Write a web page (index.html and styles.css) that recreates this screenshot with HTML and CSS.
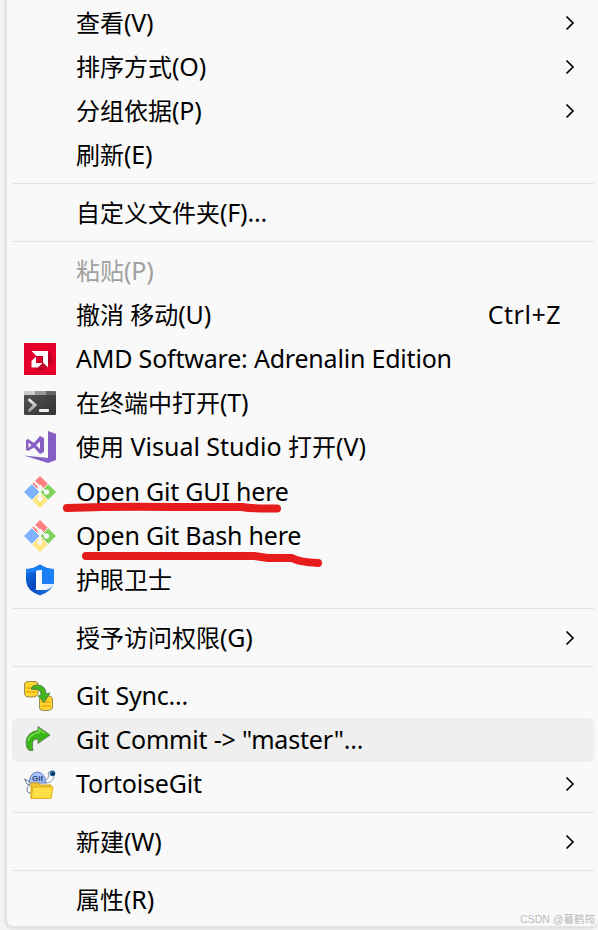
FILE: index.html
```html
<!DOCTYPE html>
<html lang="zh-CN">
<head>
  <meta charset="UTF-8" />
  <meta name="viewport" content="width=device-width, initial-scale=1.0"/>
  <title>Context Menu</title>
  <link rel="stylesheet" href="styles.css">
</head>
<body>

  <!-- Shared shapes -->
  <svg class="defs">
    <symbol id="arrow" viewBox="0 0 10 16">
      <path d="M1.5 1.5 L8 8 L1.5 14.5" fill="none" stroke="#000" stroke-width="1.7"/>
    </symbol>
    <symbol id="git" viewBox="0 0 32 32">
      <path d="M16 0 L24 8 L16 16 L8 8Z" fill="#ff8080"/>
      <path d="M24 8 L32 16 L24 24 L16 16Z" fill="#80d25b"/>
      <path d="M8 8 L16 16 L8 24 L0 16Z" fill="#80b3ff"/>
      <path d="M16 16 L24 24 L16 32 L8 24Z" fill="#ffe680"/>
      <path d="M8 8 L24 24 M24 8 L8 24" fill="none" stroke="#f9f9f9" stroke-width="1"/>
      <path d="M9 4.500 L16 11 V23 M16 11 L22.500 16" fill="none" stroke="#f9f9f9" stroke-width="2.2"/>
      <circle cx="16" cy="11.500" r="2.600" fill="#f9f9f9"/>
      <circle cx="22.500" cy="16" r="2.600" fill="#f9f9f9"/>
      <circle cx="16" cy="22.500" r="2.600" fill="#f9f9f9"/>
    </symbol>
  </svg>

  <div class="menu">
    <div class="item"><span class="label">查看<span class="en">(V)</span></span><svg class="arrow"><use href="#arrow"/></svg></div>
    <div class="item"><span class="label">排序方式<span class="en">(O)</span></span><svg class="arrow"><use href="#arrow"/></svg></div>
    <div class="item"><span class="label">分组依据<span class="en">(P)</span></span><svg class="arrow"><use href="#arrow"/></svg></div>
    <div class="item"><span class="label">刷新<span class="en">(E)</span></span></div>
    <div class="line"></div>
    <div class="item"><span class="label">自定义文件夹<span class="en">(F)...</span></span></div>
    <div class="line"></div>
    <div class="item disabled"><span class="label">粘贴<span class="en">(P)</span></span></div>
    <div class="item"><span class="label">撤消 移动<span class="en">(U)</span></span><span class="key">Ctrl+Z</span></div>
    <div class="item">
      <svg class="icon" viewBox="0 0 32 32">
        <rect width="32" height="32" fill="#e4002b"/>
        <path d="M24 8 L28 12 V20 L17 28 L8 24Z" fill="#b90024"/>
        <path d="M7.500 8 H24 V24.500 L19 19.500 V13 H12.500Z" fill="#fff"/>
        <path d="M12 13.500 V20 H18.500 L14 24.500 H7.500 V18Z" fill="#fff"/>
        <rect x="13" y="13" width="6" height="6.500" fill="#d20029"/>
      </svg>
      <span class="label en">AMD Software: Adrenalin Edition</span>
    </div>
    <div class="item">
      <svg class="icon" viewBox="0 0 32 32">
        <defs>
          <linearGradient id="term" x2="1" y2="1"><stop stop-color="#555"/><stop offset="1" stop-color="#333"/></linearGradient>
          <linearGradient id="prompt" x2="0" y2="1"><stop stop-color="#eee"/><stop offset="1" stop-color="#999"/></linearGradient>
        </defs>
        <rect y="4" width="32" height="24" rx="1.5" fill="url(#term)"/>
        <path d="M0 8 V5.500 Q0 4 1.500 4 H11 V8Z" fill="#ccc"/>
        <path d="M11 4 H22 V8 H11Z" fill="#999"/>
        <path d="M22 4 H30.500 Q32 4 32 5.500 V8 H22Z" fill="#666"/>
        <path d="M5.500 13 L11 18 L5.500 23.500" fill="none" stroke="url(#prompt)" stroke-width="3" stroke-linecap="round"/>
        <rect x="15" y="22" width="10" height="3" rx="1" fill="#eee"/>
      </svg>
      <span class="label">在终端中打开<span class="en">(T)</span></span>
    </div>
    <div class="item">
      <svg class="icon" viewBox="0 0 32 32">
        <path d="M24 0 L32 3 V29 L24 32 L0 24.500 L24 27Z" fill="#865fc5"/>
        <path d="M2 9 L4 8 L10 12 L16 5 L20 7 V21 L16 23 L10 16.500 L4 20 L2 19Z M4.500 11.500 V17 L7.500 14.300Z M16 10.500 L12 14.300 L16 18Z" fill="#865fc5" fill-rule="evenodd"/>
      </svg>
      <span class="label">使用<span class="en wide"> Visual Studio </span>打开<span class="en wide">(V)</span></span>
    </div>
    <div class="item marked first">
      <svg class="icon"><use href="#git"/></svg>
      <span class="label en">Open Git GUI here</span>
      <svg class="mark gui" viewBox="0 0 224 16"><path d="M6 8 Q60 6 112 7 H181 Q192 9 216 8.500"/></svg>
    </div>
    <div class="item marked">
      <svg class="icon"><use href="#git"/></svg>
      <span class="label en">Open Git Bash here</span>
      <svg class="mark bash" viewBox="0 0 244 18"><path d="M6 6 H174 L188 8 H212 Q218 12 238 13"/></svg>
    </div>
    <div class="item">
      <svg class="icon" viewBox="0 0 32 32">
        <defs>
          <linearGradient id="shield" x2="1" y2="1"><stop stop-color="#1479ed"/><stop offset=".5" stop-color="#0847bd"/><stop offset="1" stop-color="#1f86f5"/></linearGradient>
          <linearGradient id="ell" x2="1" y2="0"><stop stop-color="#fff"/><stop offset="1" stop-color="#dcecff"/></linearGradient>
        </defs>
        <path d="M16 .5 Q23 5 30 5 V17 Q29 27 16 31.500 Q3 27 2 17 V5 Q9 5 16 .5Z" fill="url(#shield)"/>
        <path d="M16 .5 Q23 5 30 5 V17 L29.500 20 H18 V7 L2 9 V5 Q9 5 16 .5Z" fill="#1b80f6"/>
        <path d="M12 7 Q15 5.500 18 6 V20 H29.500 Q27.500 25 22 26 H12Z" fill="url(#ell)"/>
      </svg>
      <span class="label">护眼卫士</span>
    </div>
    <div class="line"></div>
    <div class="item"><span class="label">授予访问权限<span class="en">(G)</span></span><svg class="arrow"><use href="#arrow"/></svg></div>
    <div class="line"></div>
    <div class="item">
      <svg class="icon" viewBox="0 0 32 32">
        <g fill="#ffd62e" stroke="#9b8a55" stroke-width="1">
          <path d="M.5 4 Q1 1.500 4 1.500 H11 Q14 2 14 4 V14 Q13 17 9 17 H5 Q1 17 .5 14Z"/>
          <path d="M15.500 19 Q16 16 20 16 H25 Q28.500 16.500 28.500 19 V28 Q27 30.500 24 30.500 H19 Q16 30.500 15.500 28Z"/>
        </g>
        <path d="M2 8 H12 M2 12 H12 M17 22 H27 M17 26 H27" stroke="#efaa12" stroke-width="1.3"/>
        <path d="M7 9 Q8 5 14 5 Q22 6 22 14 L26 13 L20 22.500 L14 16 L17 15 Q17 10 13 9.500Z" fill="#45b51c" stroke="#56814c"/>
      </svg>
      <span class="label en">Git Sync...</span>
    </div>
    <div class="item active">
      <svg class="icon" viewBox="0 0 32 32">
        <path d="M9 26.500 H5 Q2 24 2 18 Q3 8 14 6.500 V2.500 L26 11 L14 19.500 V15 Q9 15 8.500 19 Q8 22 9 26.500Z" fill="#39b615" stroke="#64855d"/>
        <path d="M4 17 Q6 10 15 8.500 V5.500 L21 10" fill="none" stroke="#75df4e" stroke-width="1.500"/>
      </svg>
      <span class="label en">Git Commit -&gt; "master"...</span>
    </div>
    <div class="item">
      <svg class="icon" viewBox="0 0 32 32">
        <path d="M6 14 L.5 11 L3 16 L6 17 M6 17 Q2 19 3 23 Q4 26 9 25" fill="#fff" stroke="#62788b"/>
        <path d="M20 13 Q24 12 25 8 L24 5 Q26 2 30 3 L30 9 Q28 15 22 15Z" fill="#fff" stroke="#8b99a5"/>
        <path d="M5 15 Q6 4 14 4 Q21 5 22 15Z" fill="#a6c4fb" stroke="#657eb5"/>
        <circle cx="28.500" cy="5.500" r="2.800" fill="#12659d"/>
        <circle cx="29" cy="6" r="1.300" fill="#061c30"/>
        <text class="tiny" x="8" y="12.500">Git</text>
        <path d="M7 15 H14 L16 17 H27 V30 H7Z" fill="#efc42c" stroke="#d6a317"/>
        <path d="M9 19 H29 L27 30.500 H7Z" fill="#ffdf46" stroke="#dfaf22"/>
      </svg>
      <span class="label en">TortoiseGit</span><svg class="arrow"><use href="#arrow"/></svg>
    </div>
    <div class="line"></div>
    <div class="item"><span class="label">新建<span class="en">(W)</span></span><svg class="arrow"><use href="#arrow"/></svg></div>
    <div class="line"></div>
    <div class="item"><span class="label">属性<span class="en">(R)</span></span></div>
    <div class="watermark">CSDN @暮鹤筠</div>
  </div>

</body>
</html>
```
FILE: styles.css
```css
* {
  box-sizing: border-box;
}

body {
  margin: 0;
  height: 930px;
  overflow: hidden;
  background: #f4f4f4;
  font-family: "Noto Sans", "Noto Sans CJK SC", sans-serif;
  color: #000;
}

.defs {
  display: none;
}

.menu {
  position: relative;
  height: 928px;
  margin-left: 5px;
  padding: 1px 4px 0 5px;
  background: #f9f9f9;
  border: 2px solid #e3e3e3;
  border-top: none;
  border-right: none;
  border-radius: 0 0 8px 8px;
  box-shadow: 0 1px 3px #ddd;
}

.item {
  display: grid;
  grid-template-columns: 32px 1fr auto;
  column-gap: 20px;
  align-items: center;
  height: 44px;
  padding: 0 19px 0 12px;
  border-radius: 5px;
  font-size: 24px;
  line-height: 44px;
  white-space: pre;
}

.label {
  grid-column: 2;
}

.en {
  font-size: 25px;
  line-height: 42px;
  letter-spacing: -0.2px;
}

.label.en,
.key {
  padding-bottom: 2px;
  line-height: 42px;
}

.wide {
  letter-spacing: 0;
}

.icon {
  grid-column: 1;
  width: 32px;
  height: 32px;
}

.arrow {
  grid-column: 3;
  width: 10px;
  height: 16px;
}

.key {
  grid-column: 3;
  margin-right: 14px;
  font-size: 25px;
  letter-spacing: 0.5px;
}

.disabled {
  color: #a0a0a0;
}

.active {
  background: #efefef;
}

.line {
  height: 14px;
  padding-top: 6px;
}

.line::before {
  content: "";
  display: block;
  height: 1px;
  background: #e3e3e3;
}

/* Red pen strokes */
.marked {
  position: relative;
}

.first {
  margin-top: 1px;
}

.mark {
  position: absolute;
  fill: none;
  stroke: #e71c1c;
  stroke-width: 8;
  stroke-linecap: round;
  stroke-linejoin: round;
}

.gui {
  left: 49px;
  top: 30px;
  width: 224px;
  height: 16px;
}

.bash {
  left: 68px;
  top: 36px;
  width: 244px;
  height: 18px;
  z-index: 1;
}

.tiny {
  font: bold 8px "Liberation Sans", sans-serif;
  fill: #26427c;
}

.watermark {
  position: absolute;
  right: 3px;
  bottom: 0;
  font-family: "Liberation Sans", "Noto Sans CJK SC", sans-serif;
  font-size: 10.5px;
  color: #bcbcbc;
}
```
